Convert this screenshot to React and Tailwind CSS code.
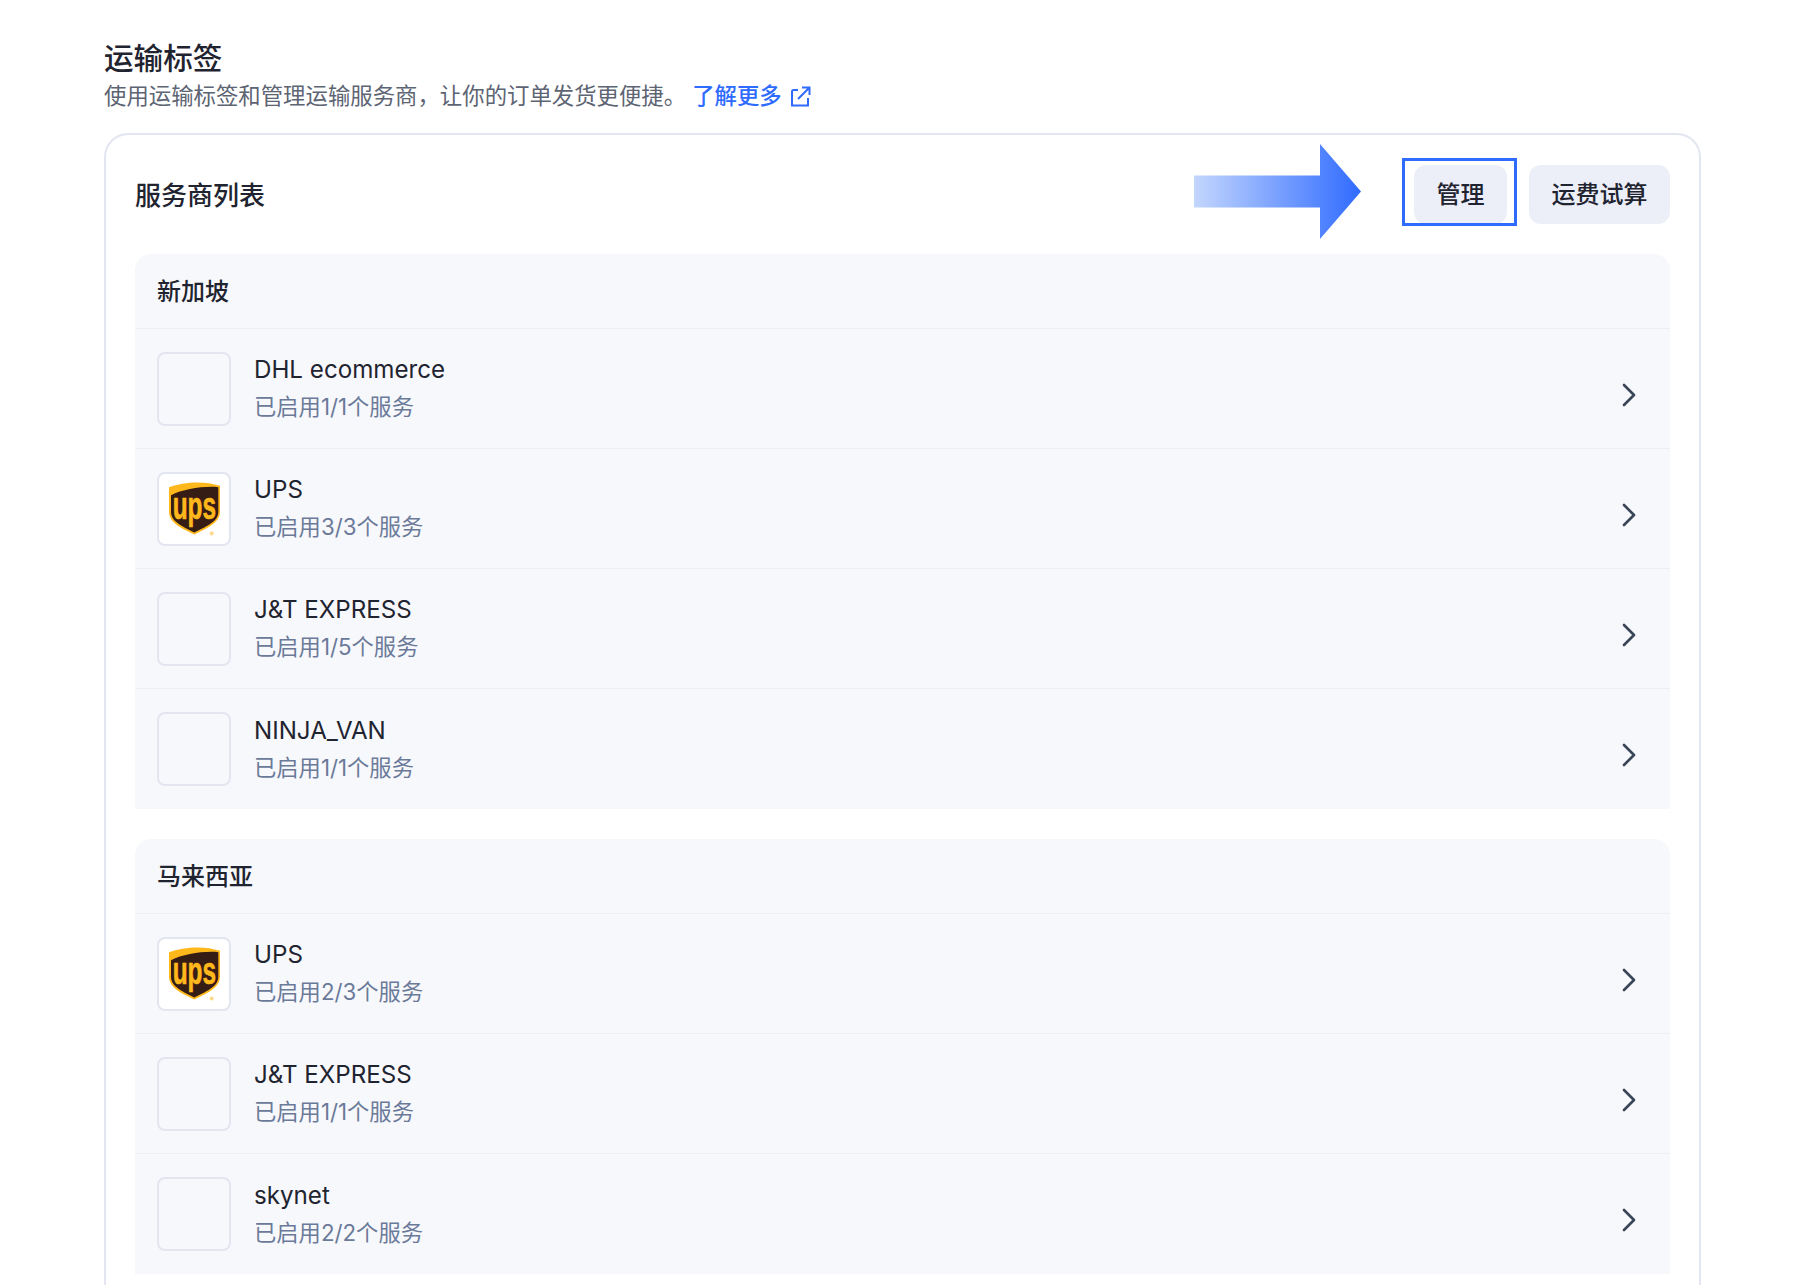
import { ChevronRight } from 'lucide-react'

const groups = [
  {
    name: '新加坡',
    rows: [
      { name: 'DHL ecommerce', sub: '已启用1/1个服务' },
      { name: 'UPS', sub: '已启用3/3个服务', ups: true },
      { name: 'J&T EXPRESS', sub: '已启用1/5个服务' },
      { name: 'NINJA_VAN', sub: '已启用1/1个服务' },
    ],
  },
  {
    name: '马来西亚',
    rows: [
      { name: 'UPS', sub: '已启用2/3个服务', ups: true },
      { name: 'J&T EXPRESS', sub: '已启用1/1个服务' },
      { name: 'skynet', sub: '已启用2/2个服务' },
    ],
  },
]

function UpsLogo() {
  return (
    <svg className="overflow-visible" width="51" height="57" viewBox="57 45 153 170">
      <path d="M57 66C100 50 165 46 210 62V140C210 175 165 192 133 208C100 192 57 175 57 140Z" fill="#ffb81c" />
      <path d="M63 90C100 72 160 62 205 66V140C205 172 163 186 133 202C103 186 63 172 63 140Z" fill="#351c15" />
      <text x="68" y="163" fontFamily="Liberation Sans, sans-serif" fontSize="118" fontWeight="700" fill="#ffb81c" stroke="#ffb81c" strokeWidth="2" textLength="130" lengthAdjust="spacingAndGlyphs">ups</text>
      <circle cx="185" cy="205" r="6" fill="#ffd98a" />
    </svg>
  )
}

function Row({ row }) {
  return (
    <div className="h-[120px] flex items-center pl-[22px] pr-[21px] border-b border-[#eceef3] last:border-b-0">
      <div className={`w-[74px] h-[74px] rounded-lg border-2 border-[#e3e5f0] flex items-center justify-center shrink-0 ${row.ups ? 'bg-white' : ''}`}>
        {row.ups && <UpsLogo />}
      </div>
      <div className="ml-[23px] flex-1">
        <div className="text-[24.15px] leading-[36px] text-[#1f2430]">{row.name}</div>
        <div className="text-[22.3px] leading-[37px] text-[#6b7a99]">{row.sub}</div>
      </div>
      <ChevronRight size={40} strokeWidth={1.6} className="text-[#3b4558] mt-[12px]" />
    </div>
  )
}

export default function App() {
  return (
    <div className="h-[1285px] overflow-hidden bg-white pl-[104px] pr-[94px] pt-[39px] font-['Inter','Noto_Sans_CJK_SC',sans-serif]">
      <h1 className="text-[29.6px] leading-[38px] font-medium text-[#1f2430]">运输标签</h1>
      <p className="mt-[2px] text-[22.4px] leading-[34px] text-[#5d6473] flex items-center">
        使用运输标签和管理运输服务商，让你的订单发货更便捷。
        <a className="text-[#2f6bff] font-medium ml-[6px] flex items-center gap-2">
          了解更多
          <svg width="21" height="21" viewBox="0 0 21 21" fill="none" stroke="currentColor" strokeWidth="2">
            <path d="M8 4H3.5a1.5 1.5 0 0 0-1.5 1.5V19.500H18V12" />
            <path d="M8 13L19.500 1.500M12 1.500H19.500V9" />
          </svg>
        </a>
      </p>

      <div className="mt-[20px] border-2 border-b-0 border-[#e3e5f0] rounded-t-[24px] px-[29px] h-[1200px]">
        <div className="h-[119px] flex items-center justify-between">
          <h2 className="pt-px text-[26px] font-medium text-[#1f2430]">服务商列表</h2>
          <div className="flex items-center gap-[22px] relative">
            <svg className="absolute right-[309px] top-[-21px]" width="167" height="95" viewBox="0 0 167 95">
              <defs>
                <linearGradient id="arrowFill" x1="0" x2="1" y1="0" y2="0">
                  <stop offset="0" stopColor="#c3d6fd" />
                  <stop offset="1" stopColor="#2f6bff" />
                </linearGradient>
              </defs>
              <path d="M0 31.500H126V0L167 47.500L126 95V63.500H0Z" fill="url(#arrowFill)" />
            </svg>
            <div className="relative">
              <button className="block w-[93px] h-[59px] pt-px rounded-xl bg-[#eceff8] text-[24px] font-medium text-[#1f2430]">管理</button>
              <div className="absolute -left-[12px] -right-[10px] -top-[7px] -bottom-[2px] border-[3px] border-[#2f6bff]" />
            </div>
            <button className="block w-[141px] h-[59px] pt-px rounded-xl bg-[#eceff8] text-[24px] font-medium text-[#1f2430]">运费试算</button>
          </div>
        </div>

        <div className="flex flex-col gap-[30px]">
          {groups.map((group) => (
            <div key={group.name} className="bg-[#f7f8fc] rounded-t-[16px]">
              <div className="h-[75px] flex items-center pl-[22px] pt-[1px] border-b border-[#eceef3] text-[24px] font-medium text-[#1f2430]">
                {group.name}
              </div>
              {group.rows.map((row) => (
                <Row key={row.name} row={row} />
              ))}
            </div>
          ))}
        </div>
      </div>
    </div>
  )
}
